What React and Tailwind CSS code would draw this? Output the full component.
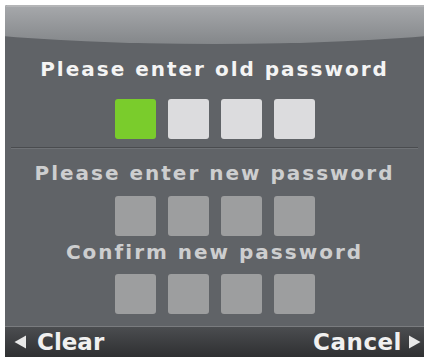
import React from 'react';

const font = { fontFamily: '"DejaVu Sans", Verdana, sans-serif' };

const Boxes = ({ colors }) => (
  <div className="flex justify-center gap-[12px] pl-[1px]">
    {colors.map((c, i) => (
      <div key={i} className={`w-[41px] h-[40px] rounded-[3px] ${c}`} />
    ))}
  </div>
);

const Tri = ({ dir }) => (
  <svg width="14" height="16" viewBox="0 0 14 16">
    {dir === 'left' ? (
      <polygon points="13,1.5 13,14.5 1.5,8" fill="#e8e8e8" />
    ) : (
      <polygon points="1,1.5 1,14.5 12.5,8" fill="#e8e8e8" />
    )}
  </svg>
);

const App = () => {
  return (
    <div className="w-[426px] h-[357px] bg-white pt-[5px] pl-[5px] pr-[2px] overflow-hidden" style={font}>
      <div className="h-[352px] bg-[#606367] flex flex-col overflow-hidden rounded-tl-[2px]">
        {/* header sheen */}
        <div className="h-[39px] overflow-hidden border-t-2 border-[#b4b5b7]">
          <div className="-mx-[30%] h-full rounded-b-[50%_36px] bg-gradient-to-b from-[#a5a7aa] to-[#84878a]" />
        </div>

        <div className="mt-[14px] text-center text-[20px] leading-[23px] font-bold tracking-[2px] text-[#f4f4f4]">
          Please enter old password
        </div>
        <div className="mt-[18px]">
          <Boxes colors={['bg-[#7acc2c]', 'bg-[#dcdcde]', 'bg-[#dcdcde]', 'bg-[#dcdcde]']} />
        </div>

        <div className="mt-[8px] mx-[6px] h-[2px] border-t border-[#4a4c4f] bg-[#6f7276]" />

        <div className="mt-[13px] text-center text-[20px] leading-[23px] font-bold tracking-[2px] text-[#cdcecf]">
          Please enter new password
        </div>
        <div className="mt-[11px]">
          <Boxes colors={['bg-[#9d9e9f]', 'bg-[#9d9e9f]', 'bg-[#9d9e9f]', 'bg-[#9d9e9f]']} />
        </div>

        <div className="mt-[5px] text-center text-[20px] leading-[23px] font-bold tracking-[2px] text-[#cdcecf]">
          Confirm new password
        </div>
        <div className="mt-[10px]">
          <Boxes colors={['bg-[#9d9e9f]', 'bg-[#9d9e9f]', 'bg-[#9d9e9f]', 'bg-[#9d9e9f]']} />
        </div>

        {/* bottom bar */}
        <div className="mt-auto h-[31px] border-t border-[#7a7c7f] bg-gradient-to-b from-[#4b4d50] to-[#2f3032] flex items-center justify-between pl-[8px] pr-[2px]">
          <div className="flex items-center gap-[10px]">
            <Tri dir="left" />
            <span className="text-[23px] leading-[27px] font-bold text-[#f0f0f0]">Clear</span>
          </div>
          <div className="flex items-center gap-[6px]">
            <span className="text-[23px] leading-[27px] font-bold text-[#f0f0f0] tracking-[0.5px]">Cancel</span>
            <Tri dir="right" />
          </div>
        </div>
      </div>
    </div>
  );
};

export default App;
